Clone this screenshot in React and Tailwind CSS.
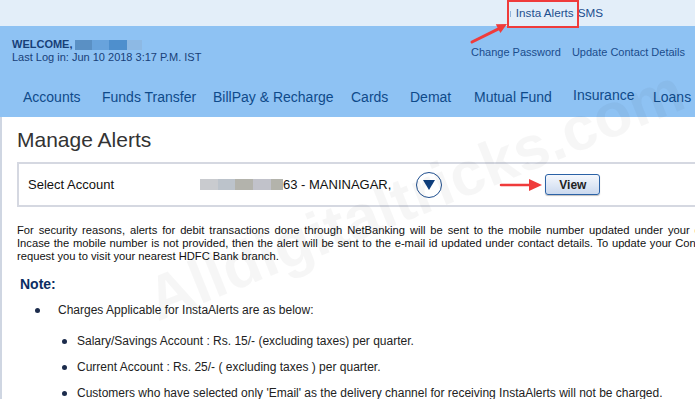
import React from "react";

const navItems = [
  { label: "Accounts", w: "w-[79px]", cls: "" },
  { label: "Funds Transfer", w: "w-[111px]", cls: "" },
  { label: "BillPay & Recharge", w: "w-[138px]", cls: "" },
  { label: "Cards", w: "w-[59px]", cls: "" },
  { label: "Demat", w: "w-[64px]", cls: "" },
  { label: "Mutual Fund", w: "w-[99px]", cls: "" },
  { label: "Insurance", w: "w-[80px]", cls: "-translate-y-[2px]" },
  { label: "Loans", w: "", cls: "" },
];

const subItems = [
  "Salary/Savings Account : Rs. 15/- (excluding taxes) per quarter.",
  "Current Account : Rs. 25/- ( excluding taxes ) per quarter.",
  "Customers who have selected only 'Email' as the delivery channel for receiving InstaAlerts will not be charged.",
];

export default function App() {
  return (
    <div className="relative w-[695px] h-[399px] overflow-hidden bg-white font-['Liberation_Sans',Arial,sans-serif]">
      {/* top strip */}
      <div className="h-[26px] bg-[#e3eef9] flex items-center justify-end pr-[92px] text-[11.7px] text-[#1d4f8f]">
        <span className="w-[1px] h-[6px] bg-[#8fb4dd] mr-[5px] mt-[1px]" />
        <span>Insta Alerts</span>
        <span className="ml-[4px]">SMS</span>
      </div>
      <div className="absolute left-[507px] top-0 w-[72px] h-[28px] border-2 border-[#ef3b3b]" />
      <svg className="absolute left-[466px] top-[18px] w-[46px] h-[30px]" viewBox="0 0 46 30" fill="none">
        <path d="M6 24 L33 10.6" stroke="#ef3b3b" strokeWidth="3" strokeLinecap="round" />
        <path d="M41 6 L29.8 6.2 L34.4 15 Z" fill="#ef3b3b" />
      </svg>

      {/* blue header */}
      <div className="bg-[#8ec2f3] h-[91px] flex flex-col">
        <div className="flex justify-between items-start pl-[12px] pr-[10px] pt-[12px]">
          <div className="text-[11px] leading-[13px] text-[#183f78]">
            <div className="flex items-center">
              <span className="font-bold">WELCOME,</span>
              <span className="flex ml-[2px] h-[10px]">
                <span className="w-[17px] bg-[#5a90c4]" />
                <span className="w-[17px] bg-[#68a3dc]" />
                <span className="w-[18px] bg-[#4e8fcd]" />
                <span className="w-[15px] bg-[#8db9e4]" />
              </span>
            </div>
            <div>Last Log in: Jun 10 2018 3:17 P.M. IST</div>
          </div>
          <div className="flex gap-[11px] text-[11px] text-[#1a4c8c] pt-[6px]">
            <span>Change Password</span>
            <span>Update Contact Details</span>
          </div>
        </div>
        <nav className="mt-auto mb-[9px] flex pl-[23px] text-[14px] text-[#0e4a8a] whitespace-nowrap">
          {navItems.map((n) => (
            <span key={n.label} className={`${n.w} shrink-0 ${n.cls}`}>
              {n.label}
            </span>
          ))}
        </nav>
      </div>

      {/* content */}
      <div className="border-l-2 border-[#cfd6e2] h-full pl-[15px]">
        <h1 className="text-[21px] leading-[26px] pt-[10px] text-[#333]">Manage Alerts</h1>
        <div className="mt-[9px] h-[45px] border-2 border-r-0 border-[#d5d8e1] flex items-center text-[13px] text-[#111] whitespace-nowrap">
          <span className="pl-[9px] w-[181px] shrink-0">Select Account</span>
          <span className="flex h-[11px] shrink-0">
            <span className="w-[18px] bg-[#c9cbcf]" />
            <span className="w-[17px] bg-[#bcc3cb]" />
            <span className="w-[18px] bg-[#b3b3ac]" />
            <span className="w-[18px] bg-[#c1c2ca]" />
            <span className="w-[12px] bg-[#b3b3ab]" />
          </span>
          <span>63 - MANINAGAR,</span>
          <span className="ml-[25px] w-[26px] h-[26px] shrink-0 rounded-full border-[1.5px] border-[#1f4f8f] flex items-center justify-center">
            <svg width="12" height="10" viewBox="0 0 12 10">
              <path d="M0 0 H12 L6 10 Z" fill="#0f3f7d" />
            </svg>
          </span>
          <svg className="ml-[57px] shrink-0" width="44" height="14" viewBox="0 0 44 14" fill="none">
            <path d="M2 7 L33 7" stroke="#ef3b3b" strokeWidth="2.5" strokeLinecap="round" />
            <path d="M30 1 L43 7 L30 13 Z" fill="#ef3b3b" />
          </svg>
          <button className="ml-[2px] w-[55px] h-[21px] shrink-0 rounded-[3px] border border-[#2b62a6] bg-gradient-to-b from-[#f5f8fd] to-[#cbd9ee] text-[12px] font-bold text-[#222] shadow-[0_1px_1px_rgba(0,0,0,0.25)]">
            View
          </button>
        </div>
        <div className="mt-[17px] w-[754px] text-[11.2px] leading-[13px] text-[#111]">
          <p className="text-justify [text-align-last:justify]">
            For security reasons, alerts for debit transactions done through NetBanking will be sent to the mobile number updated under your contact details.
          </p>
          <p className="text-justify [text-align-last:justify]">
            Incase the mobile number is not provided, then the alert will be sent to the e-mail id updated under contact details. To update your Contact details, we
          </p>
          <p>request you to visit your nearest HDFC Bank branch.</p>
        </div>
        <div className="mt-[11px] pl-[3px] text-[14px] font-bold text-[#0b2d63]">Note:</div>
        <ul className="mt-[5px] text-[12px] text-[#222] whitespace-nowrap">
          <li className="flex items-center h-[20px] pl-[18px]">
            <span className="w-[5px] h-[5px] rounded-full bg-[#1c2c4c] mr-[18px]" />
            Charges Applicable for InstaAlerts are as below:
          </li>
          {subItems.map((t, i) => (
            <li key={i} className={`flex items-center h-[20px] pl-[45px] ${i === 0 ? "mt-[11px]" : "mt-[6px]"}`}>
              <span className="w-[5px] h-[5px] rounded-full bg-[#1c2c4c] mr-[10px]" />
              {t}
            </li>
          ))}
        </ul>
      </div>

      {/* watermark */}
      <div className="pointer-events-none absolute left-[150px] top-[255px] -rotate-[22deg] origin-left text-[62px] font-bold text-black/[0.035] whitespace-nowrap">
        Alldigitaltricks.com
      </div>
    </div>
  );
}
